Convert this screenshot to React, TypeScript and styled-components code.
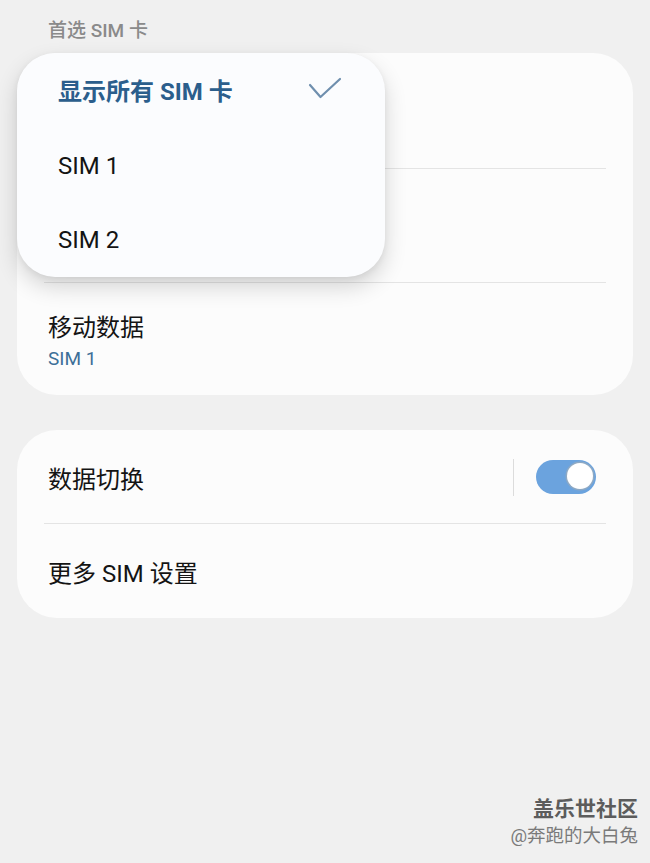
import styled, { createGlobalStyle } from 'styled-components'

const Global = createGlobalStyle`
  html, body {
    margin: 0;
    padding: 0;
    background: #f0f0f0;
  }
  body {
    font-family: Roboto, "Noto Sans CJK SC", "Noto Sans", sans-serif;
    color: #141414;
  }
`

const Page = styled.div`
  position: relative;
  min-height: 863px;
  padding: 0 17px;
  box-sizing: border-box;
  overflow: hidden;
`

const SectionTitle = styled.div`
  padding: 20px 0 0 31px;
  height: 53px;
  box-sizing: border-box;
  font-size: 19px;
  line-height: 22px;
  color: #8a8a8a;
  font-weight: 500;
`

const Card = styled.div<{ $gap?: number }>`
  position: relative;
  background: #fcfcfc;
  border-radius: 40px;
  margin-top: ${p => p.$gap ?? 0}px;
`

const Row = styled.div<{ $h: number; $divider?: boolean }>`
  position: relative;
  height: ${p => p.$h}px;
  padding: 0 37px 0 31px;
  display: flex;
  align-items: center;
  gap: 22px;

  ${p =>
    p.$divider &&
    `
    &::after {
      content: '';
      position: absolute;
      left: 27px;
      right: 27px;
      bottom: 0;
      height: 1.5px;
      background: #e4e4e4;
    }
  `}
`

const RowText = styled.div`
  flex: 1;
  display: flex;
  flex-direction: column;
  gap: 2px;
  padding-top: 5px;
`

const Title = styled.div`
  font-size: 24px;
  line-height: 32px;
  color: #141414;
`

const Sub = styled.div`
  font-size: 19px;
  line-height: 26px;
  color: #3d6f98;
`

const VDivider = styled.div`
  width: 1.5px;
  height: 37px;
  background: #dcdcdc;
`

const Toggle = styled.div`
  position: relative;
  width: 60px;
  height: 34px;
  border-radius: 17px;
  background: #6ba3de;

  &::after {
    content: '';
    position: absolute;
    right: 3px;
    top: 3px;
    width: 26px;
    height: 26px;
    border-radius: 50%;
    background: #fff;
    box-shadow: 0 0 0 1.5px #8ea9c4;
  }
`

const Dropdown = styled.div`
  position: absolute;
  left: 0;
  top: 0;
  width: 368px;
  height: 224px;
  box-sizing: border-box;
  padding-top: 2px;
  border-radius: 38px;
  background: #fbfcfe;
  box-shadow: 0 10px 22px rgba(0, 0, 0, 0.16), 0 2px 6px rgba(0, 0, 0, 0.06);
  z-index: 2;
`

const Option = styled.div<{ $selected?: boolean }>`
  height: 74px;
  box-sizing: border-box;
  padding: 0 43px ${p => (p.$selected ? 6 : 0)}px 41px;
  display: flex;
  align-items: center;
  justify-content: space-between;
  font-size: 24px;
  font-weight: ${p => (p.$selected ? 700 : 400)};
  color: ${p => (p.$selected ? '#2b5e8c' : '#141414')};
`

const Watermark = styled.div`
  position: absolute;
  right: 12px;
  bottom: 15px;
  display: flex;
  flex-direction: column;
  align-items: flex-end;
  gap: 2px;
`

const MarkBrand = styled.div`
  font-size: 21px;
  line-height: 26px;
  font-weight: 700;
  color: #5c5c5c;
`

const MarkUser = styled.div`
  font-size: 18.5px;
  line-height: 24px;
  color: #7a7a7a;
`

function Check() {
  return (
    <svg width="34" height="24" viewBox="0 0 34 24" fill="none">
      <path
        d="M2 8 L12.5 20 L32 2"
        stroke="#6f8fae"
        strokeWidth="2.2"
        strokeLinecap="round"
        strokeLinejoin="round"
      />
    </svg>
  )
}

export default function App() {
  return (
    <Page>
      <Global />
      <SectionTitle>首选 SIM 卡</SectionTitle>

      <Card>
        {/* rows hidden under the open dropdown */}
        <Row $h={116} $divider />
        <Row $h={114} $divider />
        <Row $h={112}>
          <RowText>
            <Title>移动数据</Title>
            <Sub>SIM 1</Sub>
          </RowText>
        </Row>

        <Dropdown>
          <Option $selected>
            <span>显示所有 SIM 卡</span>
            <Check />
          </Option>
          <Option>SIM 1</Option>
          <Option>SIM 2</Option>
        </Dropdown>
      </Card>

      <Card $gap={35}>
        <Row $h={94} $divider>
          <RowText>
            <Title>数据切换</Title>
          </RowText>
          <VDivider />
          <Toggle />
        </Row>
        <Row $h={94}>
          <RowText>
            <Title>更多 SIM 设置</Title>
          </RowText>
        </Row>
      </Card>

      <Watermark>
        <MarkBrand>盖乐世社区</MarkBrand>
        <MarkUser>@奔跑的大白兔</MarkUser>
      </Watermark>
    </Page>
  )
}
